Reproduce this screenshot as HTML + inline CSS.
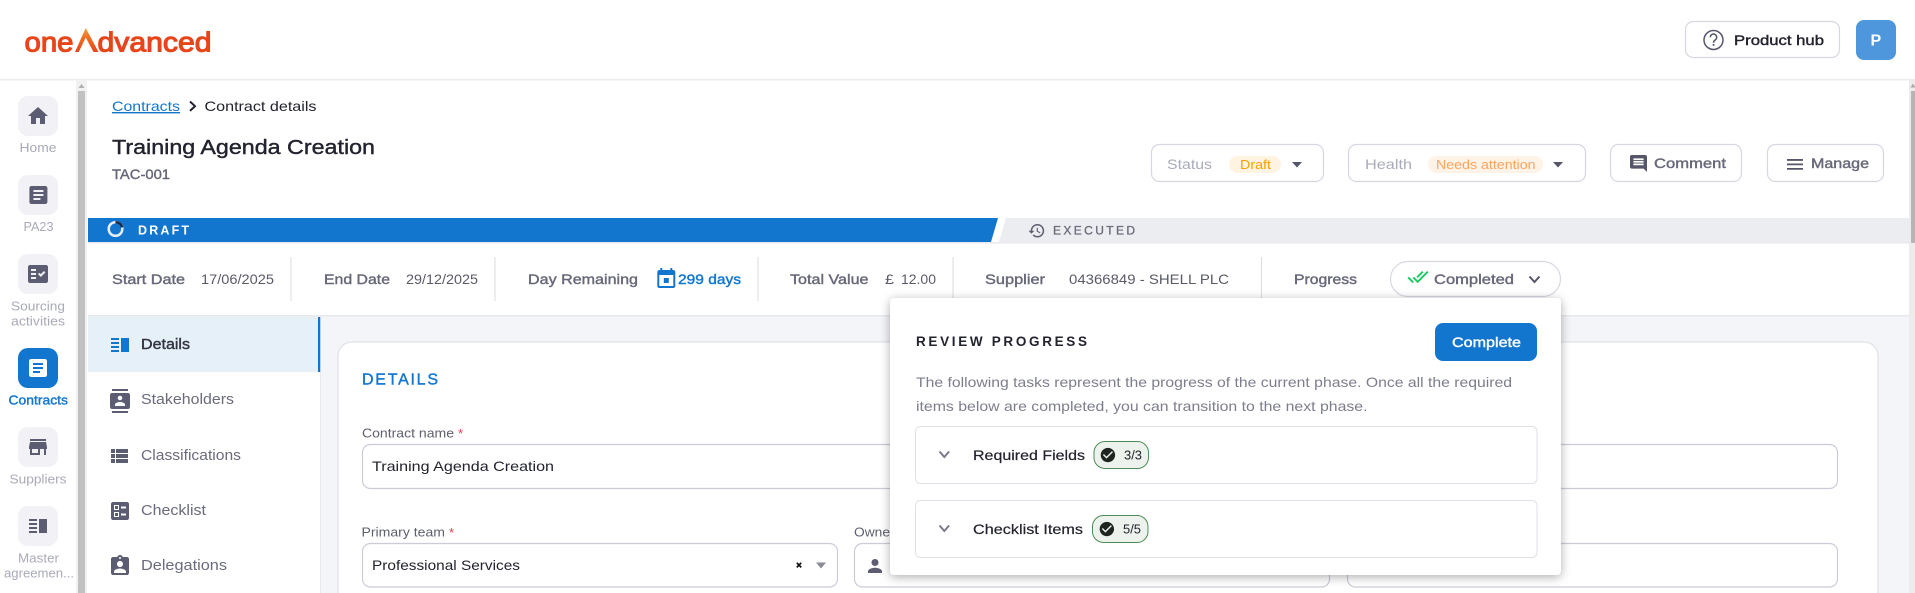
<!DOCTYPE html>
<html lang="en"><head><meta charset="utf-8"><title>Contract details</title>
<style>
html,body{margin:0;padding:0;background:#fff;width:1915px;height:593px;overflow:hidden}
svg{display:block}
text{font-family:"Liberation Sans",sans-serif;font-size:14px}
.m{stroke-width:.4}
.lb{fill:#676879;stroke:#676879}
.lb.r{stroke:none}
.vl{fill:#5a5b68}
.nv{fill:#6a6b7d;font-size:15px}
.sb{fill:#a9aab8;font-size:13px}
.f{fill:#5c5c72}
.bx{fill:#fff;stroke:#d6d7e2;stroke-width:1.2}
</style></head><body>
<svg width="1915" height="593" viewBox="0 0 1915 593" xmlns="http://www.w3.org/2000/svg">
<defs><linearGradient id="lg" x1="0" y1="0" x2="0" y2="1"><stop offset="0" stop-color="#f6a13a"/><stop offset=".45" stop-color="#ee6a20"/><stop offset="1" stop-color="#e8451a"/></linearGradient></defs>
<rect width="1915" height="593" fill="#fff"/>
<!-- header -->
<rect x="0" y="79" width="1915" height="1.500" fill="#ececf0"/>
<text x="24.500" y="51.500" style="font-size:28px" fill="#e8451a" stroke="#e8451a" stroke-width="1.100" textLength="49" lengthAdjust="spacingAndGlyphs">one</text>
<path d="M75 52L85.700 28 98.500 52H93.500L85.700 37.500 78.800 52z" fill="url(#lg)"/>
<text x="97.500" y="51.500" style="font-size:28px" fill="#e8451a" stroke="#e8451a" stroke-width="1.100" textLength="114" lengthAdjust="spacingAndGlyphs">dvanced</text>
<rect class="bx" x="1685.500" y="21.500" width="154" height="36" rx="8"/>
<circle cx="1713.500" cy="40" r="9.500" fill="none" stroke="#55566a" stroke-width="1.500"/>
<path d="M1710.300 37.300a3.200 3.200 0 1 1 5 2.600c-1.200.9-1.800 1.400-1.800 2.800" fill="none" stroke="#55566a" stroke-width="1.500"/>
<rect x="1712.700" y="44" width="1.700" height="1.800" fill="#55566a"/>
<text x="1734" y="45" fill="#22232e" stroke="#22232e" class="m" textLength="90" lengthAdjust="spacingAndGlyphs">Product hub</text>
<rect x="1856" y="20" width="40" height="40" rx="8" fill="#4e97dd"/>
<text x="1870.500" y="45.500" fill="#fff" font-weight="700" style="font-size:16px">P</text>

<!-- sidebar -->
<rect x="76" y="80" width="11" height="513" fill="#f1f1f1"/>
<rect x="78" y="91" width="7" height="502" fill="#c1c1c1"/>
<path d="M81.500 84l3 4h-6z" fill="#b0b0b0"/>
<rect x="18" y="96" width="40" height="40" rx="10" fill="#f1f1f6"/>
<path class="f" transform="translate(26 104)" d="M10 20v-6h4v6h5v-8h3L12 3 2 12h3v8z"/>
<text class="sb" x="19.500" y="152" textLength="37" lengthAdjust="spacingAndGlyphs">Home</text>
<rect x="18" y="175" width="40" height="40" rx="10" fill="#f1f1f6"/>
<path class="f" transform="translate(26.400 183)" d="M19 3H5c-1.100 0-2 .9-2 2v14c0 1.100.9 2 2 2h14c1.100 0 2-.9 2-2V5c0-1.100-.9-2-2-2zm-5 14H7v-2h7v2zm3-4H7v-2h10v2zm0-4H7V7h10v2z"/>
<text class="sb" x="23.500" y="231" textLength="30" lengthAdjust="spacingAndGlyphs">PA23</text>
<rect x="18" y="254" width="40" height="40" rx="10" fill="#f1f1f6"/>
<path class="f" transform="translate(26 262)" d="M20 3H4c-1.100 0-2 .9-2 2v14c0 1.100.9 2 2 2h16c1.100 0 2-.9 2-2V5c0-1.100-.9-2-2-2zm-10 14H5v-2h5v2zm0-4H5v-2h5v2zm0-4H5V7h5v2zm4.820 6L12 12.160l1.410-1.410 1.410 1.420L17.990 9l1.420 1.420L14.820 15z"/>
<text class="sb" x="11" y="310.500" textLength="54" lengthAdjust="spacingAndGlyphs">Sourcing</text>
<text class="sb" x="11" y="325.500" textLength="54" lengthAdjust="spacingAndGlyphs">activities</text>
<rect x="18" y="348" width="40" height="40" rx="10" fill="#1276cf"/>
<path fill="#fff" transform="translate(26 356)" d="M19 3H5c-1.100 0-2 .9-2 2v14c0 1.100.9 2 2 2h14c1.100 0 2-.9 2-2V5c0-1.100-.9-2-2-2zm-5 14H7v-2h7v2zm3-4H7v-2h10v2zm0-4H7V7h10v2z"/>
<text x="8.500" y="404.500" fill="#1276cf" stroke="#1276cf" class="m" style="font-size:13px" textLength="59.500" lengthAdjust="spacingAndGlyphs">Contracts</text>
<rect x="18" y="427" width="40" height="40" rx="10" fill="#f1f1f6"/>
<path class="f" transform="translate(26 435)" d="M20 4H4v2h16V4zm1 10v-2l-1-5H4l-1 5v2h1v6h10v-6h4v6h2v-6h1zm-9 4H6v-4h6v4z"/>
<text class="sb" x="9.500" y="483.500" textLength="57" lengthAdjust="spacingAndGlyphs">Suppliers</text>
<rect x="18" y="506" width="40" height="40" rx="10" fill="#f1f1f6"/>
<path class="f" transform="translate(26 514)" d="M3 15h8v-2H3v2zm0 4h8v-2H3v2zm0-8h8V9H3v2zm0-6v2h8V5H3zm10 0v14h8V5h-8z"/>
<text class="sb" x="18" y="562.500" textLength="41" lengthAdjust="spacingAndGlyphs">Master</text>
<text class="sb" x="4" y="577.500" textLength="70" lengthAdjust="spacingAndGlyphs">agreemen...</text>

<!-- page head -->
<text x="112" y="111" fill="#1276cf" textLength="68" lengthAdjust="spacingAndGlyphs" text-decoration="underline">Contracts</text>
<path d="M190 101.500l5 4.700-5 4.700" fill="none" stroke="#22232e" stroke-width="2"/>
<text x="204.500" y="111" fill="#22232e" textLength="112" lengthAdjust="spacingAndGlyphs">Contract details</text>
<text x="112" y="154" fill="#22232e" stroke="#22232e" class="m" style="font-size:20.500px" textLength="263" lengthAdjust="spacingAndGlyphs">Training Agenda Creation</text>
<text x="112" y="179" class="lb m" textLength="58" lengthAdjust="spacingAndGlyphs">TAC-001</text>

<rect class="bx" x="1151.500" y="144.500" width="172" height="37" rx="8"/>
<text x="1167" y="169" fill="#a9abb9" textLength="45" lengthAdjust="spacingAndGlyphs">Status</text>
<rect x="1229" y="156" width="52" height="17" rx="8.500" fill="#fff3e2"/>
<text x="1240" y="169" fill="#f5a100" style="font-size:12.500px" textLength="31" lengthAdjust="spacingAndGlyphs">Draft</text>
<path d="M1292 162h10l-5 5.500z" fill="#55566a"/>
<rect class="bx" x="1348.500" y="144.500" width="237" height="37" rx="8"/>
<text x="1365" y="169" fill="#a9abb9" textLength="47" lengthAdjust="spacingAndGlyphs">Health</text>
<rect x="1428" y="156" width="115" height="17" rx="8.500" fill="#fff3e8"/>
<text x="1436" y="169" fill="#ffa45c" style="font-size:12.500px" textLength="99.500" lengthAdjust="spacingAndGlyphs">Needs attention</text>
<path d="M1553 162h10l-5 5.500z" fill="#55566a"/>
<rect class="bx" x="1610.500" y="144.500" width="131" height="37" rx="8"/>
<path fill="#55566a" transform="translate(1628.300 153.300) scale(.85)" d="M21.990 4c0-1.100-.89-2-1.990-2H4c-1.100 0-2 .9-2 2v12c0 1.100.9 2 2 2h14l4 4-.01-18zM18 14H6v-2h12v2zm0-3H6V9h12v2zm0-3H6V6h12v2z"/>
<text x="1654" y="168" class="lb m" textLength="72" lengthAdjust="spacingAndGlyphs">Comment</text>
<rect class="bx" x="1767.500" y="144.500" width="116" height="37" rx="8"/>
<path fill="#55566a" transform="translate(1784.300 153.700) scale(.89)" d="M3 18h18v-2H3v2zm0-5h18v-2H3v2zm0-7v2h18V6H3z"/>
<text x="1811" y="168" class="lb m" textLength="58" lengthAdjust="spacingAndGlyphs">Manage</text>

<!-- phase bar -->
<path d="M88 218H998L991 242H88z" fill="#1276cf"/>
<path d="M1006 218H1909V242H999z" fill="#ecedf0"/>
<rect x="88" y="242" width="1821" height="1.500" fill="#e8e9ef"/>
<circle cx="115.500" cy="229" r="6.800" fill="none" stroke="#e8eef8" stroke-width="2.500"/>
<path d="M115.500 222.200a6.800 6.800 0 0 1 6.600 5.200" fill="none" stroke="#1b2a44" stroke-width="2.500"/>
<text x="138" y="234.500" fill="#fff" font-weight="700" style="font-size:12.500px" textLength="51" lengthAdjust="spacing">DRAFT</text>
<path fill="#5d5e6e" transform="translate(1027.700 221.700) scale(.75)" d="M13 3c-4.970 0-9 4.030-9 9H1l3.890 3.890.07.14L9 12H6c0-3.870 3.130-7 7-7s7 3.130 7 7-3.130 7-7 7c-1.930 0-3.680-.79-4.940-2.060l-1.420 1.420C8.270 19.990 10.510 21 13 21c4.970 0 9-4.030 9-9s-4.030-9-9-9zm-1 5v5l4.280 2.540.72-1.210-3.500-2.080V8H12z"/>
<text x="1053" y="234.500" fill="#6a6b7a" stroke="#6a6b7a" stroke-width=".3" style="font-size:12px" textLength="82" lengthAdjust="spacing">EXECUTED</text>

<!-- info row -->
<rect x="88" y="315" width="1821" height="1.800" fill="#e8e9ef"/>
<g fill="#dcdde3"><rect x="290.500" y="257" width="1" height="44"/><rect x="494.500" y="257" width="1" height="44"/><rect x="757.500" y="257" width="1" height="44"/><rect x="952.500" y="257" width="1" height="44"/><rect x="1261" y="257" width="1" height="44"/></g>
<text x="112" y="284" class="lb m" textLength="73" lengthAdjust="spacingAndGlyphs">Start Date</text>
<text x="201" y="284" class="vl" textLength="73" lengthAdjust="spacingAndGlyphs">17/06/2025</text>
<text x="324" y="284" class="lb m" textLength="66" lengthAdjust="spacingAndGlyphs">End Date</text>
<text x="406" y="284" class="vl" textLength="72" lengthAdjust="spacingAndGlyphs">29/12/2025</text>
<text x="528" y="284" class="lb m" textLength="110" lengthAdjust="spacingAndGlyphs">Day Remaining</text>
<path fill="#1276cf" transform="translate(654.300 267)" d="M19 3h-1V1h-2v2H8V1H6v2H5c-1.110 0-1.990.9-1.990 2L3 19c0 1.100.89 2 2 2h14c1.100 0 2-.9 2-2V5c0-1.100-.9-2-2-2zm0 16H5V8h14v11zM9.500 11h5v5h-5z"/>
<text x="678" y="284" fill="#1276cf" stroke="#1276cf" class="m" textLength="63" lengthAdjust="spacingAndGlyphs">299 days</text>
<text x="790" y="284" class="lb m" textLength="78.500" lengthAdjust="spacingAndGlyphs">Total Value</text>
<text x="885" y="284" class="vl" textLength="9" lengthAdjust="spacingAndGlyphs">£</text>
<text x="901" y="284" class="vl" textLength="35" lengthAdjust="spacingAndGlyphs">12.00</text>
<text x="985" y="284" class="lb m" textLength="60" lengthAdjust="spacingAndGlyphs">Supplier</text>
<text x="1069" y="284" class="vl" textLength="160" lengthAdjust="spacingAndGlyphs">04366849 - SHELL PLC</text>
<text x="1294" y="284" class="lb m" textLength="63" lengthAdjust="spacingAndGlyphs">Progress</text>
<rect class="bx" x="1390.500" y="261.500" width="170" height="35" rx="17.500"/>
<path fill="#12c75a" transform="translate(1407.200 266) scale(.9)" d="M18 7l-1.410-1.410-6.340 6.340 1.410 1.410L18 7zm4.240-1.410L11.660 16.170 7.480 12l-1.410 1.410L11.660 19l12-12-1.420-1.410zM.41 13.410L6 19l1.410-1.410L1.830 12 .41 13.410z"/>
<text x="1434" y="284" class="lb m" textLength="80" lengthAdjust="spacingAndGlyphs">Completed</text>
<path d="M1529.500 276.500l5 5.500 5-5.500" fill="none" stroke="#55566a" stroke-width="2"/>

<!-- lower content -->
<rect x="320" y="317" width="1589" height="276" fill="#f4f5f9"/>
<rect x="320" y="317" width="1" height="276" fill="#e8e9ef"/>
<rect x="88" y="317" width="232" height="55" fill="#e6f0f9"/>
<rect x="318" y="317" width="2.200" height="55" fill="#1276cf"/>
<path fill="#1276cf" transform="translate(108 333)" d="M3 15h8v-2H3v2zm0 4h8v-2H3v2zm0-8h8V9H3v2zm0-6v2h8V5H3zm10 0v14h8V5h-8z"/>
<text x="141" y="349" fill="#33343f" stroke="#33343f" class="m" style="font-size:15px" textLength="49" lengthAdjust="spacingAndGlyphs">Details</text>
<path class="f" transform="translate(108 389)" d="M20 0H4v2h16V0zM4 24h16v-2H4v2zM20 4H4c-1.100 0-2 .9-2 2v12c0 1.100.9 2 2 2h16c1.100 0 2-.9 2-2V6c0-1.100-.9-2-2-2zm-8 2.750c1.240 0 2.250 1.010 2.250 2.250s-1.010 2.250-2.250 2.250S9.750 10.240 9.750 9 10.760 6.750 12 6.750zM17 17H7v-1.500c0-1.670 3.330-2.500 5-2.500s5 .83 5 2.500V17z"/>
<text class="nv" x="141" y="404" textLength="93" lengthAdjust="spacingAndGlyphs">Stakeholders</text>
<path class="f" transform="translate(107 444)" d="M4 14h4v-4H4v4zm0 5h4v-4H4v4zM4 9h4V5H4v4zm5 5h12v-4H9v4zm0 5h12v-4H9v4zM9 5v4h12V5H9z"/>
<text class="nv" x="141" y="460" textLength="100" lengthAdjust="spacingAndGlyphs">Classifications</text>
<path class="f" transform="translate(108 499)" d="M13 9.500h5v-2h-5v2zm0 7h5v-2h-5v2zm6 4.500H5c-1.100 0-2-.9-2-2V5c0-1.100.9-2 2-2h14c1.100 0 2 .9 2 2v14c0 1.100-.9 2-2 2zM6 11h5V6H6v5zm1-4h3v3H7V7zM6 18h5v-5H6v5zm1-4h3v3H7v-3z" fill-rule="evenodd"/>
<text class="nv" x="141" y="515" textLength="65" lengthAdjust="spacingAndGlyphs">Checklist</text>
<path class="f" transform="translate(108 554)" d="M19 3h-4.180C14.400 1.840 13.300 1 12 1c-1.300 0-2.400.84-2.820 2H5c-1.100 0-2 .9-2 2v14c0 1.100.9 2 2 2h14c1.100 0 2-.9 2-2V5c0-1.100-.9-2-2-2zm-7 0c.55 0 1 .45 1 1s-.45 1-1 1-1-.45-1-1 .45-1 1-1zm0 4c1.660 0 3 1.340 3 3s-1.340 3-3 3-3-1.340-3-3 1.340-3 3-3zm6 12H6v-1.400c0-2 4-3.100 6-3.100s6 1.100 6 3.100V19z"/>
<text class="nv" x="141" y="570" textLength="86" lengthAdjust="spacingAndGlyphs">Delegations</text>

<!-- card -->
<path d="M338 593V356a14 14 0 0 1 14-14H1864a14 14 0 0 1 14 14V593" fill="#fff" stroke="#dcdde6" stroke-width="1"/>
<text x="362" y="384.500" fill="#1276cf" stroke="#1276cf" class="m" style="font-size:16px" textLength="76" lengthAdjust="spacing">DETAILS</text>
<text x="362" y="437.500" fill="#5f6070" style="font-size:12.500px" textLength="92" lengthAdjust="spacingAndGlyphs">Contract name</text>
<text x="458" y="438" fill="#e0404a" style="font-size:13px">*</text>
<rect x="362.500" y="444.500" width="1475" height="44" rx="8" fill="#fff" stroke="#cbccd8" stroke-width="1.200"/>
<text x="372" y="471" fill="#22232e" textLength="182" lengthAdjust="spacingAndGlyphs">Training Agenda Creation</text>
<text x="361.500" y="536.500" fill="#5f6070" style="font-size:12.500px" textLength="83.500" lengthAdjust="spacingAndGlyphs">Primary team</text>
<text x="449" y="537" fill="#e0404a" style="font-size:13px">*</text>
<rect x="362.500" y="543.500" width="475" height="43.500" rx="8" fill="#fff" stroke="#cbccd8" stroke-width="1.200"/>
<text x="372" y="570" fill="#22232e" textLength="148" lengthAdjust="spacingAndGlyphs">Professional Services</text>
<path d="M796.800 562.800l4.400 4.600m0-4.600l-4.400 4.600" stroke="#111" stroke-width="1.700" fill="none"/>
<path d="M816 562.500h10l-5 6z" fill="#8a8b96"/>
<text x="854" y="536.500" fill="#5f6070" style="font-size:12.500px" textLength="36" lengthAdjust="spacingAndGlyphs">Owne</text>
<rect x="854.500" y="543.500" width="475" height="43.500" rx="8" fill="#fff" stroke="#cbccd8" stroke-width="1.200"/>
<path class="f" transform="translate(864.500 555.500) scale(.875)" d="M12 12c2.210 0 4-1.790 4-4s-1.790-4-4-4-4 1.790-4 4 1.790 4 4 4zm0 2c-2.670 0-8 1.340-8 4v2h16v-2c0-2.660-5.330-4-8-4z"/>
<rect x="1347.500" y="543.500" width="490" height="43.500" rx="8" fill="#fff" stroke="#cbccd8" stroke-width="1.200"/>

<!-- popup -->
<rect x="890" y="298" width="671" height="277" rx="4" fill="#fff" style="filter:drop-shadow(0 2px 5px rgba(0,0,0,.32))"/>
<text x="916" y="346" fill="#22232e" font-weight="700" style="font-size:13.500px" textLength="171" lengthAdjust="spacing">REVIEW PROGRESS</text>
<rect x="1435" y="323" width="102" height="38" rx="8" fill="#1276cf"/>
<text x="1452" y="347" fill="#fff" stroke="#fff" class="m" textLength="69" lengthAdjust="spacingAndGlyphs">Complete</text>
<text x="916" y="387" fill="#7d7e8d" textLength="596" lengthAdjust="spacingAndGlyphs">The following tasks represent the progress of the current phase. Once all the required</text>
<text x="916" y="411" fill="#7d7e8d" textLength="451.500" lengthAdjust="spacingAndGlyphs">items below are completed, you can transition to the next phase.</text>
<rect x="915.500" y="426.500" width="621.500" height="57" rx="5" fill="#fff" stroke="#e0e1e8"/>
<path d="M939.500 451.500l4.800 5.500 4.800-5.500" fill="none" stroke="#7a7b8a" stroke-width="2"/>
<text x="973" y="460" fill="#22232e" stroke="#22232e" stroke-width=".2" textLength="112" lengthAdjust="spacingAndGlyphs">Required Fields</text>
<rect x="1094" y="441.500" width="54.500" height="27" rx="11" fill="#edf3ec" stroke="#4c8c56"/>
<path fill="#1e2420" transform="translate(1099.300 446.400) scale(.72)" d="M12 2C6.480 2 2 6.480 2 12s4.480 10 10 10 10-4.480 10-10S17.520 2 12 2zm-2 15l-5-5 1.410-1.410L10 14.170l7.590-7.590L19 8l-9 9z"/>
<text x="1124" y="459.500" fill="#22232e" style="font-size:13px" textLength="18" lengthAdjust="spacingAndGlyphs">3/3</text>
<rect x="915.500" y="500.500" width="621.500" height="57" rx="5" fill="#fff" stroke="#e0e1e8"/>
<path d="M939.500 525.500l4.800 5.500 4.800-5.500" fill="none" stroke="#7a7b8a" stroke-width="2"/>
<text x="973" y="534" fill="#22232e" stroke="#22232e" stroke-width=".2" textLength="110" lengthAdjust="spacingAndGlyphs">Checklist Items</text>
<rect x="1092.500" y="515.500" width="55.500" height="27" rx="11" fill="#edf3ec" stroke="#4c8c56"/>
<path fill="#1e2420" transform="translate(1098.200 520.400) scale(.72)" d="M12 2C6.480 2 2 6.480 2 12s4.480 10 10 10 10-4.480 10-10S17.520 2 12 2zm-2 15l-5-5 1.410-1.410L10 14.170l7.590-7.590L19 8l-9 9z"/>
<text x="1123" y="533.500" fill="#22232e" style="font-size:13px" textLength="18" lengthAdjust="spacingAndGlyphs">5/5</text>

<!-- page scrollbar -->
<rect x="1909" y="80" width="6" height="513" fill="#ececec"/>
<rect x="1911" y="91" width="4" height="152" fill="#b5b5b5"/>
<path d="M1913 83.500l2.500 4h-5z" fill="#a8a8a8"/>
</svg>
</body></html>
